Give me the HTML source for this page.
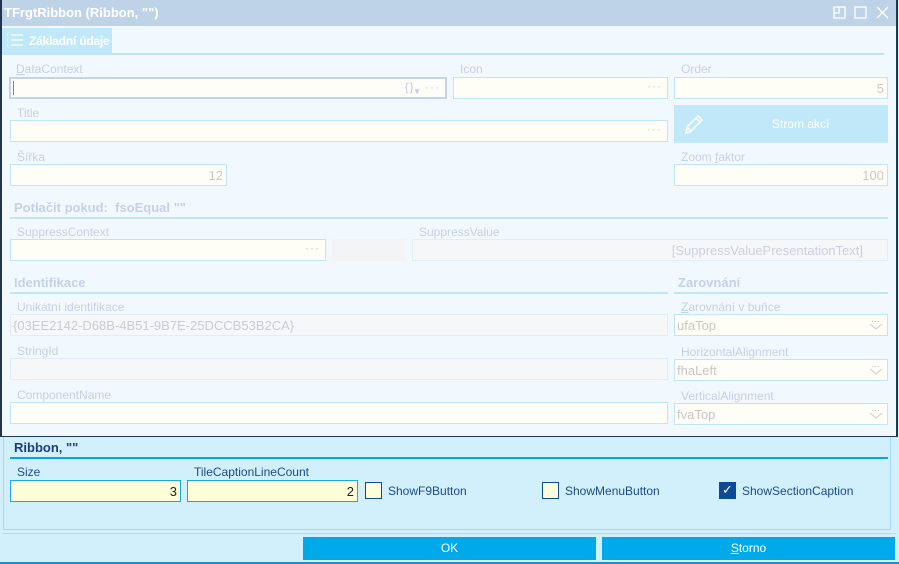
<!DOCTYPE html>
<html><head><meta charset="utf-8"><style>
*{box-sizing:border-box;margin:0;padding:0}
body{width:899px;height:564px;overflow:hidden;background:#d2f0fc;font-family:"Liberation Sans",sans-serif;font-size:12px;position:relative}
.a{position:absolute;white-space:nowrap}
.win{left:0;top:0;width:898px;height:437px;background:#f2f9fe}
.tb{left:0;top:0;width:896px;height:26px;background:#bfd3e8;color:#fff;font-weight:bold;font-size:13px;padding:5px 0 0 4px}
.lbl{color:#c6d0e4;font-size:12px}
.in{background:#fefef6;border:1px solid #c0e6f6;height:22px}
.gr{background:#f5f7f8;border:1px solid #e2eef4;height:22px}
.dots{position:absolute;right:5px;top:1px;color:#c8ccd4;font-size:12px;letter-spacing:1px}
.val{position:absolute;right:3px;top:3px;color:#c8c8c8;font-size:13px}
.lv{position:absolute;left:2px;top:3px;color:#ccc4c4;font-size:13px}
.dd{position:absolute;right:4px;top:5px}
.h{color:#c4d2e8;font-weight:bold;font-size:13px}
.line{height:2px;background:#c0e6f6}
.bin{background:#fefed8;border:1px solid #1aa7e2;height:22px}
.cb{width:17px;height:17px;border:1.5px solid #0b4a95;background:#fefed8}
.bl{color:#1a4a8a;font-size:12px}
.btn{background:#00aaea;color:#fff;text-align:center;height:23px;line-height:23px;font-size:12px}
</style></head><body>
<div class="a" style="left:3px;top:436px;width:888px;height:94px;border:1px solid #a0dcf0"></div>
<div class="a" style="left:3px;top:533px;width:893px;height:1px;background:#a8dff2"></div>
<div class="a" style="left:0;top:562px;width:899px;height:2px;background:#1a8fd8"></div>

<div class="a bl" style="left:14px;top:440px;font-weight:bold;font-size:13px;color:#1a3e7a">Ribbon, ""</div>
<div class="a" style="left:10px;top:457px;width:878px;height:2px;background:#00a8e8"></div>
<div class="a bl" style="left:17px;top:465px">Size</div>
<div class="a bl" style="left:194px;top:465px">TileCaptionLineCount</div>
<div class="a bin" style="left:10px;top:480px;width:171px"><span class="val" style="color:#222">3</span></div>
<div class="a bin" style="left:187px;top:480px;width:171px"><span class="val" style="color:#222">2</span></div>
<div class="a cb" style="left:365px;top:482px"></div><div class="a bl" style="left:388px;top:484px">ShowF9Button</div>
<div class="a cb" style="left:542px;top:482px"></div><div class="a bl" style="left:565px;top:484px">ShowMenuButton</div>
<div class="a cb" style="left:719px;top:482px;background:#0b4a95;color:#fff;font-size:13px;line-height:14px;text-align:center">✓</div><div class="a bl" style="left:742px;top:484px">ShowSectionCaption</div>
<div class="a btn" style="left:303px;top:537px;width:293px">OK</div>
<div class="a btn" style="left:602px;top:537px;width:293px"><u>S</u>torno</div>

<div class="a win">
<div class="a tb">TFrgtRibbon (Ribbon, "")</div>
<svg class="a" style="left:832px;top:5px" width="62" height="16" viewBox="0 0 62 16" fill="none" stroke="#fff" stroke-width="1.3"><rect x="2" y="2" width="11" height="11"/><path d="M7 2v6H2"/><rect x="23" y="2" width="11" height="11"/><path d="M45 2l11 11M56 2L45 13"/></svg>
<div class="a" style="left:2px;top:28px;width:110px;height:25px;background:#c0e8f8;color:#fff;font-weight:bold;font-size:12px;padding:6px 0 0 27px;letter-spacing:-0.2px">Základní údaje</div>
<svg class="a" style="left:6px;top:33px" width="18" height="14" stroke="#fff" stroke-width="1.2"><path d="M1 2h1M5 2h12M1 7h1M5 7h12M1 12h1M5 12h12"/></svg>
<div class="a line" style="left:2px;top:53px;width:882px"></div>

<div class="a lbl" style="left:16px;top:62px"><u>D</u>ataContext</div>
<div class="a in" style="left:9px;top:77px;width:438px;border:2px solid #c4d4e6"><span class="dots" style="color:#c4cee0">{}<sub>▾</sub> ···</span><span class="a" style="left:2px;top:2px;width:1px;height:14px;background:#888"></span></div>
<div class="a lbl" style="left:460px;top:62px">Icon</div>
<div class="a in" style="left:453px;top:77px;width:215px"><span class="dots">···</span></div>
<div class="a lbl" style="left:681px;top:62px">Order</div>
<div class="a in" style="left:674px;top:77px;width:214px"><span class="val">5</span></div>

<div class="a lbl" style="left:17px;top:106px">Title</div>
<div class="a in" style="left:10px;top:120px;width:658px"><span class="dots">···</span></div>
<div class="a" style="left:674px;top:105px;width:214px;height:38px;background:#c0e8f8;color:#fff;font-size:12px;padding:12px 0 0 98px">Strom akcí</div>
<svg class="a" style="left:682px;top:112px" width="24" height="24" fill="none" stroke="#fff" stroke-width="1.4"><path d="M4 21l1-6L16 4l4 4L9 19zM5 15l4 4M14 6l4 4"/></svg>

<div class="a lbl" style="left:17px;top:150px">Šířka</div>
<div class="a in" style="left:10px;top:164px;width:217px"><span class="val">12</span></div>
<div class="a lbl" style="left:681px;top:150px">Zoom <u>f</u>aktor</div>
<div class="a in" style="left:674px;top:164px;width:214px"><span class="val">100</span></div>

<div class="a h" style="left:14px;top:200px">Potlačit pokud:&nbsp; fsoEqual ""</div>
<div class="a line" style="left:10px;top:217px;width:878px"></div>
<div class="a lbl" style="left:17px;top:225px">SuppressContext</div>
<div class="a in" style="left:10px;top:239px;width:316px"><span class="dots">···</span></div>
<div class="a" style="left:332px;top:239px;width:74px;height:22px;background:#f2f4f5"></div>
<div class="a lbl" style="left:419px;top:225px">SuppressValue</div>
<div class="a gr" style="left:412px;top:239px;width:476px"><span class="val" style="right:24px;color:#ccd0e0">[SuppressValuePresentationText]</span></div>

<div class="a h" style="left:14px;top:275px">Identifikace</div>
<div class="a line" style="left:10px;top:292px;width:658px"></div>
<div class="a h" style="left:678px;top:275px">Zarovnání</div>
<div class="a line" style="left:674px;top:292px;width:214px"></div>

<div class="a lbl" style="left:17px;top:300px">Unikátní identifikace</div>
<div class="a gr" style="left:10px;top:314px;width:658px"><span class="lv" style="color:#c8ccd4">{03EE2142-D68B-4B51-9B7E-25DCCB53B2CA}</span></div>
<div class="a lbl" style="left:681px;top:300px"><u>Z</u>arovnání v buňce</div>
<div class="a in" style="left:674px;top:314px;width:214px"><span class="lv">ufaTop</span><svg class="dd" width="14" height="10" fill="none" stroke="#c8ccd4"><path d="M3 1.5h1M6 1.5h1M9 1.5h1M1 4l6 5 6-5"/></svg></div>

<div class="a lbl" style="left:17px;top:344px">StringId</div>
<div class="a gr" style="left:10px;top:358px;width:658px"></div>
<div class="a lbl" style="left:681px;top:345px">HorizontalAlignment</div>
<div class="a in" style="left:674px;top:359px;width:214px"><span class="lv">fhaLeft</span><svg class="dd" width="14" height="10" fill="none" stroke="#c8ccd4"><path d="M3 1.5h1M6 1.5h1M9 1.5h1M1 4l6 5 6-5"/></svg></div>

<div class="a lbl" style="left:17px;top:388px">ComponentName</div>
<div class="a in" style="left:10px;top:402px;width:658px"></div>
<div class="a lbl" style="left:681px;top:389px">VerticalAlignment</div>
<div class="a in" style="left:674px;top:403px;width:214px"><span class="lv">fvaTop</span><svg class="dd" width="14" height="10" fill="none" stroke="#c8ccd4"><path d="M3 1.5h1M6 1.5h1M9 1.5h1M1 4l6 5 6-5"/></svg></div>

<div class="a" style="left:0;top:0;width:2px;height:437px;background:#1f3550"></div>
<div class="a" style="left:896px;top:0;width:2px;height:437px;background:#1f3550"></div>
<div class="a" style="left:0;top:436px;width:898px;height:1px;background:#1f3550"></div>
</div>
</body></html>
